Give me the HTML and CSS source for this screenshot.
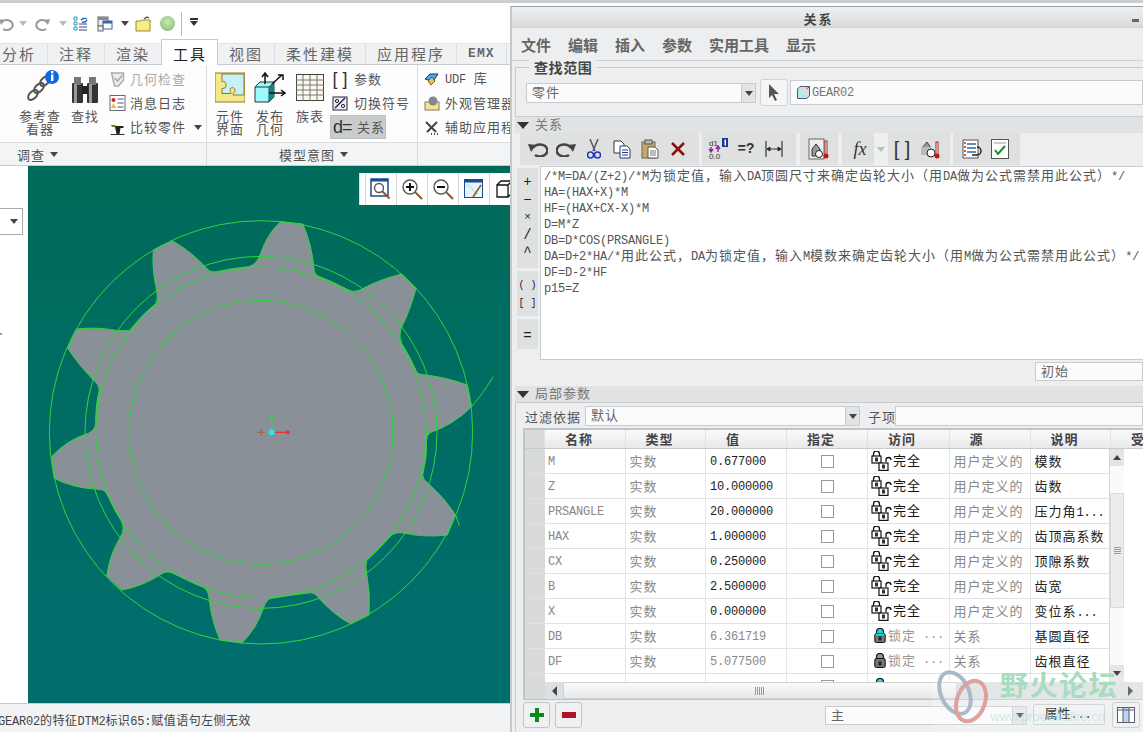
FILE: index.html
```html
<!DOCTYPE html>
<html lang="zh">
<head>
<meta charset="utf-8">
<title>关系</title>
<link rel="stylesheet" href="styles.css">
</head>
<body>
<svg class="defs" width="0" height="0">
  <symbol id="locks" viewBox="0 0 21 20">
    <path d="M2.5 5V3a3 3 0 0 1 6 0v2" fill="none" stroke="#111" stroke-width="1.3"/>
    <rect x="1" y="5" width="9" height="7" fill="#fff" stroke="#111" stroke-width="1.2"/>
    <rect x="4" y="6.5" width="3" height="4" fill="#333"/>
    <path d="M15 11V9a2.5 2.5 0 0 1 5 0" fill="none" stroke="#111" stroke-width="1.3"/>
    <rect x="8" y="12" width="9" height="7.4" fill="#fff" stroke="#111" stroke-width="1.2"/>
    <rect x="11" y="13.5" width="3" height="4" fill="#333"/>
  </symbol>
  <symbol id="lockc" viewBox="0 0 12 15">
    <path d="M2.5 6V4a3.5 3.5 0 0 1 7 0v2" fill="#18d8e8" stroke="#111" stroke-width="1.2"/>
    <rect x=".8" y="5.5" width="10.4" height="9" rx="1.5" fill="#777" stroke="#111"/>
    <rect x="1.5" y="5.5" width="9" height="2" fill="#18d8e8"/>
    <rect x="4.5" y="8.5" width="3" height="4" fill="#222"/>
  </symbol>
  <symbol id="lockg" viewBox="0 0 12 15">
    <path d="M2.5 6V4a3.5 3.5 0 0 1 7 0v2" fill="#999" stroke="#111" stroke-width="1.2"/>
    <rect x=".8" y="5.5" width="10.4" height="9" rx="1.5" fill="#777" stroke="#111"/>
    <rect x="4.5" y="8.5" width="3" height="4" fill="#222"/>
  </symbol>
</svg>

<div class="strip"></div>
<div class="main">

  <section class="cad">
    <div class="qat">
      <span class="q q1"><svg width="16" height="14" viewBox="0 0 16 14"><path d="M3 5a6 5 0 1 1 1 7" fill="none" stroke="#999" stroke-width="2"/><path d="M0 2l6 1-4 5z" fill="#999"/></svg></span>
      <span class="q q2"><i class="caret caret-lt"></i></span>
      <span class="q q3"><svg width="16" height="14" viewBox="0 0 16 14"><path d="M13 5a6 5 0 1 0-1 7" fill="none" stroke="#999" stroke-width="2"/><path d="M16 2l-6 1 4 5z" fill="#999"/></svg></span>
      <span class="q q4"><i class="caret caret-lt"></i></span>
      <span class="q q5"><svg width="16" height="16" viewBox="0 0 16 16"><path d="M1 1h3v3H1zM1 6h3v3H1zM1 11h3v3H1z" fill="#fff" stroke="#2a9ac0"/><path d="M6 8h8M6 11h8M6 14h8" stroke="#447"/><path d="M8 4a4 3 0 0 1 6-1M14 4a4 3 0 0 1-5 2" fill="none" stroke="#1b62c8" stroke-width="1.4"/></svg></span>
      <span class="q q6"><svg width="16" height="16" viewBox="0 0 16 16"><rect x="1" y="1" width="10" height="9" fill="#eee" stroke="#667"/><rect x="1" y="1" width="10" height="3" fill="#889"/><rect x="6" y="5" width="9" height="8" fill="#fff" stroke="#3465a4"/><rect x="6" y="5" width="9" height="2.5" fill="#3465a4"/><rect x="1" y="10" width="5" height="5" fill="#eee" stroke="#667"/></svg></span>
      <span class="q q7"><i class="caret"></i></span>
      <span class="q q8"><svg width="16" height="16" viewBox="0 0 16 16"><path d="M1 5h5l1-1h8v11H1z" fill="#f5ec8a" stroke="#a08a20"/><path d="M9 3l3-2 2 1" fill="none" stroke="#444" stroke-width="1.2"/></svg></span>
      <span class="q q9"><i class="ball"></i></span>
      <span class="q q10"><i class="vsep"></i></span>
      <span class="q q11"><i class="caret caret-line"></i></span>
    </div>

    <div class="tabs">
      <span class="tab tab-first">分析</span>
      <span class="tab">注释</span>
      <span class="tab">渲染</span>
      <span class="tab tab-on">工具</span>
      <span class="tab">视图</span>
      <span class="tab">柔性建模</span>
      <span class="tab">应用程序</span>
      <span class="tab tab-en">EMX</span>
      <span class="tab tab-last">管</span>
    </div>

    <div class="ribbon">
      <div class="grp grp1">
        <div class="big big1">
          <svg class="big-ic" width="38" height="40" viewBox="0 0 38 40"><g fill="none" stroke="#555" stroke-width="2"><ellipse cx="24" cy="13" rx="3.5" ry="6" transform="rotate(45 24 13)"/><ellipse cx="18" cy="20" rx="3.5" ry="6" transform="rotate(45 18 20)"/><ellipse cx="12" cy="27" rx="3.5" ry="6" transform="rotate(45 12 27)"/></g><circle cx="31" cy="9" r="7" fill="#0a6ae0"/><rect x="30" y="3" width="2.4" height="2.4" fill="#fff"/><rect x="30" y="6.5" width="2.4" height="6.5" fill="#fff"/></svg>
          <span class="lbl">参考查<br>看器</span>
        </div>
        <div class="big big2">
          <svg class="big-ic" width="30" height="40" viewBox="0 0 30 40"><rect x="2" y="15" width="11" height="20" rx="1" fill="#333"/><rect x="17" y="15" width="11" height="20" rx="1" fill="#333"/><rect x="4" y="9" width="7" height="8" fill="#777"/><rect x="19" y="9" width="7" height="8" fill="#777"/><rect x="12" y="18" width="6" height="8" fill="#222"/><rect x="4" y="16" width="3" height="19" fill="#999"/><rect x="19" y="16" width="3" height="19" fill="#999"/></svg>
          <span class="lbl">查找</span>
        </div>
        <div class="smalls">
          <div class="sm sm-off"><svg class="sm-ic" width="16" height="16" viewBox="0 0 16 16"><path d="M2 2h12v7l-5 6H5z" fill="#eee" stroke="#aaa" stroke-width="1.4"/><path d="M5 7l3 3 5-6" fill="none" stroke="#aaa" stroke-width="1.6"/></svg><span>几何检查</span></div>
          <div class="sm"><svg class="sm-ic" width="16" height="16" viewBox="0 0 16 16"><rect x=".5" y=".5" width="15" height="15" fill="#fff" stroke="#667"/><circle cx="4" cy="5" r="2" fill="#d22"/><path d="M4 8l2.5 5h-5z" fill="#e8c020"/><path d="M8 4h6M8 8h6M8 12h6" stroke="#556"/></svg><span>消息日志</span></div>
          <div class="sm"><svg class="sm-ic sm-anvil" width="16" height="14" viewBox="0 0 16 14"><path d="M1 12h14v1H1z" fill="#333"/><path d="M5 4h9v2h-3l-1 6H7L6 7z" fill="#222"/><path d="M1 3h5v2H3z" fill="#8a6a20"/></svg><span>比较零件</span><i class="caret caret-far"></i></div>
        </div>
      </div>
      <div class="grp grp2">
        <div class="big big3">
          <svg class="big-ic" width="30" height="32" viewBox="0 0 30 32"><rect width="30" height="29" y="1" fill="#f4e88a" stroke="#8a7a20"/><path d="M7 2h22v21H18c0-3 2-2 2-5s-5-3-5-.5c0 2 1 2 1 4H7v-5c3 0 4-1 4-4s-2-3-4-3z" fill="#c4f2f6" stroke="#8a7a20"/></svg>
          <span class="lbl">元件<br>界面</span>
        </div>
        <div class="big big4">
          <svg class="big-ic big-pub" width="32" height="32" viewBox="0 0 32 32"><path d="M1 15l5-5h14v15l-5 5H1z" fill="#9afafa" stroke="#333"/><path d="M1 15h14l5-5M15 15v15" fill="none" stroke="#333"/><path d="M15 15l5-5v15l-5 5z" fill="#0f8a88"/><path d="M11 12V2M8 5l3-4 3 4M15 21h15M27 18l4 3-4 3M18 12L28 3M24 3h5v5" fill="none" stroke="#111" stroke-width="1.5"/></svg>
          <span class="lbl">发布<br>几何</span>
        </div>
        <div class="big big5">
          <svg class="big-ic" width="28" height="28" viewBox="0 0 28 28"><rect x=".5" y=".5" width="27" height="26" fill="#fbf9ec" stroke="#444"/><path d="M0 6h28M0 11h28M0 16h28M0 21h28M7 1v26M14 1v26M21 1v26" stroke="#777"/></svg>
          <span class="lbl">族表</span>
        </div>
        <div class="smalls smalls2">
          <div class="sm"><span class="sm-ic2 br">[ ]</span><span>参数</span></div>
          <div class="sm"><svg class="sm-ic2" width="16" height="15" viewBox="0 0 16 15"><rect x="1" y="1" width="14" height="13" fill="#eee" stroke="#224"/><path d="M3 12L13 2" stroke="#226" stroke-width="1.5"/><circle cx="5" cy="5" r="1.6" fill="none" stroke="#222"/><circle cx="11" cy="10" r="1.6" fill="none" stroke="#222"/></svg><span>切换符号</span></div>
          <div class="sm sm-on"><span class="sm-ic2 deq">d=</span><span>关系</span></div>
        </div>
      </div>
      <div class="grp grp3">
        <div class="sm"><svg class="sm-ic3" width="16" height="14" viewBox="0 0 16 14"><path d="M1 7l5-5h8l-4 6H4z" fill="#4aa8e8" stroke="#236"/><path d="M7 13l-3-4 4-4 3 4z" fill="#e8c838" stroke="#654"/></svg><span><span class="en">UDF</span>&nbsp;&nbsp;库</span></div>
        <div class="sm"><svg class="sm-ic3" width="16" height="15" viewBox="0 0 16 15"><rect x="1" y="6" width="14" height="8" fill="#f4e68c" stroke="#876"/><circle cx="9" cy="5" r="4.5" fill="#888"/></svg><span>外观管理器</span></div>
        <div class="sm"><svg class="sm-ic3" width="16" height="15" viewBox="0 0 16 15"><path d="M2 2l10 10M13 2L3 12" stroke="#444" stroke-width="2"/><path d="M10 14h1M13 14h1M7 14h1" stroke="#111" stroke-width="1.5"/></svg><span>辅助应用程序</span></div>
      </div>
    </div>

    <div class="grpbar">
      <div class="gb gb1"><span>调查</span><i class="caret"></i></div>
      <div class="gb gb2"><span>模型意图</span><i class="caret"></i></div>
      <div class="gb gb3"></div>
    </div>

    <div class="work">
      <aside class="side">
        <div class="side-box"><i class="caret"></i></div>
        <i class="side-tick"></i>
      </aside>
      <div class="view">
        <svg class="gear" width="482" height="537" viewBox="0 0 482 537">
          <g transform="translate(2 34) scale(.33333)" fill="none" stroke="#2fd63c" stroke-width="3">
            <path class="gear-body" d="M600 207L655 200Q680 195 692 160Q712 100 752 65L818 72Q845 130 852 205Q852 222 865 228Q915 248 960 272Q980 278 1000 265Q1050 238 1115 222L1158 265Q1140 335 1113 385Q1105 410 1115 430Q1140 470 1160 515Q1165 525 1190 525Q1260 535 1312 555L1325 620Q1270 675 1200 698Q1190 705 1190 720Q1192 770 1178 825Q1178 840 1195 850Q1245 895 1277 945L1252 1005Q1185 1013 1125 1000Q1100 995 1085 1005Q1050 1045 1010 1082Q1005 1100 1010 1120Q1022 1180 1017 1245L962 1272Q905 1240 860 1187Q850 1175 830 1180Q780 1185 725 1195Q708 1198 700 1225Q680 1285 637 1328L570 1320Q545 1265 537 1195Q535 1170 520 1162Q470 1140 425 1118Q405 1112 390 1125Q335 1160 275 1170L230 1128Q240 1060 272 1010Q285 990 275 965Q250 925 232 885Q225 868 205 868Q130 865 73 835L65 770Q110 720 175 700Q195 690 197 670Q197 610 208 570Q205 550 190 540Q145 495 113 445L140 387Q200 380 265 392L298 392Q335 345 378 310Q385 295 380 270Q365 210 370 150L427 122Q485 155 530 205Q540 218 560 215Z"/>
            <circle cx="693" cy="697" r="635"/>
            <circle cx="693" cy="697" r="528"/>
            <circle cx="693" cy="697" r="496"/>
            <circle cx="693" cy="697" r="396"/>
            <path d="M1325 620Q1360 580 1390 530M1277 945L1288 977"/>
            <path d="M725 697V650" stroke-width="4"/>
            <circle cx="725" cy="649" r="5" fill="#2fd63c"/>
            <path d="M725 697H772" stroke="#f03030" stroke-width="4"/>
            <circle cx="773" cy="697" r="5" fill="#f03030" stroke="#f03030"/>
            <circle cx="725" cy="697" r="8" fill="#22e8ee" stroke="#22e8ee"/>
            <path d="M683 697H705M694 686V708" stroke="#a0622a" stroke-width="3"/>
          </g>
        </svg>
        <div class="vtb">
          <span class="vb"><svg width="22" height="22" viewBox="0 0 22 22"><rect x="1" y="1" width="17" height="17" fill="#fff" stroke="#1b4a90" stroke-width="1.5"/><rect x="1" y="1" width="17" height="2.5" fill="#1b4a90"/><circle cx="9" cy="10" r="4.5" fill="#fff" stroke="#555" stroke-width="1.4"/><path d="M12.5 13.5l7 7" stroke="#8a5a30" stroke-width="2"/></svg></span>
          <span class="vb"><svg width="22" height="22" viewBox="0 0 22 22"><circle cx="9" cy="9" r="7" fill="#fff" stroke="#555" stroke-width="1.4"/><path d="M5 9h8M9 5v8" stroke="#111" stroke-width="2"/><path d="M14 14l7 7" stroke="#8a5a30" stroke-width="2"/></svg></span>
          <span class="vb"><svg width="22" height="22" viewBox="0 0 22 22"><circle cx="9" cy="9" r="7" fill="#fff" stroke="#555" stroke-width="1.4"/><path d="M5 9h8" stroke="#111" stroke-width="2"/><path d="M14 14l7 7" stroke="#8a5a30" stroke-width="2"/></svg></span>
          <span class="vb"><svg width="20" height="20" viewBox="0 0 20 20"><rect x=".5" y=".5" width="18" height="18" fill="#e8f4fc" stroke="#1b4a90"/><rect x=".5" y=".5" width="18" height="3" fill="#1b4a90"/><path d="M4 6l9 9" stroke="#9cc" stroke-width="2" stroke-dasharray="1 2"/><path d="M17 6L9 18" stroke="#8a5a30" stroke-width="1.5"/></svg></span>
          <span class="vb"><svg width="20" height="20" viewBox="0 0 20 20"><path d="M2 6h11v12H2zM2 6l4-4h11v12l-4 4M13 6l4-4" fill="#fff" stroke="#111" stroke-width="1.3"/></svg></span>
        </div>
      </div>
    </div>
    <footer class="status"><span class="en">GEAR02</span>的特征<span class="en">DTM2</span>标识<span class="en">65:</span>赋值语句左侧无效</footer>
  </section>

  <section class="dlg">
    <div class="frame">
      <div class="title"><b>关系</b><i class="min"></i></div>
      <nav class="menu"><span>文件</span><span>编辑</span><span>插入</span><span>参数</span><span>实用工具</span><span>显示</span></nav>

      <div class="scope">
        <div class="legend">查找范围</div>
        <div class="scope-row">
          <div class="combo combo-part"><span>零件</span><i class="combo-a"><i class="caret"></i></i></div>
          <div class="pick"><svg width="12" height="17" viewBox="0 0 12 17"><path d="M1 0v14l3-3 3 6 2-1-3-6h5z" fill="#555"/></svg></div>
          <div class="field"><svg width="13" height="13" viewBox="0 0 13 13"><path d="M.5 3h9v9.500h-9z" fill="#9af4f4" stroke="#557"/><path d="M.5 3l2.500-2.500h9.500v9.500l-3 2.500M9.500 3L12.500 .5" fill="#d8dde0" stroke="#557"/></svg><span class="en">GEAR02</span></div>
        </div>
      </div>

      <div class="sect"><i class="tri"></i><span>关系</span></div>

      <div class="tools">
        <div class="tg tg1">
          <span class="ti"><svg width="20" height="16" viewBox="0 0 20 16"><path d="M5 7a7.500 6 0 1 1 2 7" fill="none" stroke="#444" stroke-width="2.500"/><path d="M0 3l8 1-5 7z" fill="#444"/></svg></span>
          <span class="ti"><svg width="20" height="16" viewBox="0 0 20 16"><path d="M15 7a7.500 6 0 1 0-2 7" fill="none" stroke="#444" stroke-width="2.500"/><path d="M20 3l-8 1 5 7z" fill="#444"/></svg></span>
          <span class="ti"><svg width="14" height="20" viewBox="0 0 14 20"><path d="M3 0l5 12M11 0L6 12" stroke="#556" stroke-width="1.5"/><circle cx="3.500" cy="16" r="3" fill="none" stroke="#1a3ac0" stroke-width="1.500"/><circle cx="10.500" cy="16" r="3" fill="none" stroke="#1a3ac0" stroke-width="1.500"/></svg></span>
          <span class="ti"><svg width="18" height="19" viewBox="0 0 18 19"><path d="M1 1h7l3 3v9H1z" fill="#fff" stroke="#333"/><path d="M7 6h7l3 3v9H7z" fill="#fff" stroke="#223a80"/><path d="M9 10h6M9 12.500h6M9 15h6" stroke="#223a80"/></svg></span>
          <span class="ti"><svg width="18" height="20" viewBox="0 0 18 20"><rect x="1" y="3" width="13" height="16" fill="#c8a868" stroke="#665"/><rect x="4" y="1" width="7" height="4" fill="#bbb" stroke="#555"/><path d="M7 8h7l3 3v8H7z" fill="#fff" stroke="#555"/><path d="M9 12h6M9 14h6M9 16h6" stroke="#777"/></svg></span>
          <span class="ti"><svg width="14" height="14" viewBox="0 0 14 14"><path d="M1 1l12 12M13 1L1 13" stroke="#8a1010" stroke-width="2.500"/></svg></span>
        </div>
        <div class="tg tg2">
          <span class="ti"><svg width="22" height="22" viewBox="0 0 22 22"><text x="2" y="8" class="svgt">d1</text><text x="2" y="21" class="svgt">0.0</text><path d="M4 9v4M2 11l2 3 2-3M11 14v-5M9 11l2-3 2 3" fill="none" stroke="#a020a0" stroke-width="1.400"/><rect x="15" y="0" width="6" height="9" fill="#1a3a90"/><rect x="17.500" y="1.500" width="1.500" height="6" fill="#fff"/></svg></span>
          <span class="ti ti-t">=?</span>
          <span class="ti"><svg width="18" height="16" viewBox="0 0 18 16"><path d="M1 0v16M17 0v16" stroke="#333" stroke-width="1.200"/><path d="M2 8h14M2 8l3-2v4zM16 8l-3-2v4z" stroke="#333"/></svg></span>
        </div>
        <div class="tg tg3">
          <span class="ti"><svg width="22" height="22" viewBox="0 0 22 22"><rect x="1" y="1" width="15" height="20" fill="#eee" stroke="#666"/><path d="M4 11l4-5 4 5v7H4z" fill="#999" stroke="#333"/><circle cx="11" cy="16" r="3.500" fill="#fff" stroke="#222"/><rect x="17" y="3" width="2" height="14" fill="#fff" stroke="#a22"/><circle cx="18" cy="18" r="2.500" fill="#c11"/></svg></span>
        </div>
        <div class="tg tg4">
          <span class="ti ti-fx">fx</span>
          <span class="ti ti-dd"><i class="caret caret-lt"></i></span>
          <span class="ti ti-br">[ ]</span>
          <span class="ti"><svg width="20" height="20" viewBox="0 0 20 20"><path d="M2 9l5-6 4 6z" fill="#999" stroke="#444"/><rect x="1" y="8" width="10" height="8" fill="#bbb"/><circle cx="11" cy="14" r="4" fill="#fff" stroke="#222"/><rect x="16" y="3" width="2" height="13" fill="#fff" stroke="#a22"/><circle cx="17" cy="17" r="2.500" fill="#c11"/></svg></span>
        </div>
        <div class="tg tg5">
          <span class="ti"><svg width="21" height="20" viewBox="0 0 21 20"><rect x="1" y="1" width="15" height="18" fill="#fff" stroke="#555"/><path d="M5 5h9M5 9h9M5 13h9" stroke="#3465a4" stroke-width="1.300"/><path d="M2 4h2M2 8h2M2 12h2M2 16h2" stroke="#c22" stroke-width="1.300"/><path d="M15 8a4 4 0 0 1 0 8h-5" fill="none" stroke="#222" stroke-width="1.500"/></svg></span>
          <span class="ti"><svg width="18" height="20" viewBox="0 0 18 20"><rect x=".5" y=".5" width="17" height="19" fill="#fff" stroke="#555"/><path d="M3 4h12" stroke="#999"/><path d="M4 11l3 4 7-8" fill="none" stroke="#1a8a2a" stroke-width="2"/></svg></span>
        </div>
      </div>

      <div class="edit-wrap">
        <div class="palette">
          <div class="pg pg1"><span>+</span><span>−</span><span class="pk">×</span><span>/</span><span>^</span></div>
          <div class="pg pg2"><span>( )</span><span>[ ]</span></div>
          <div class="pg pg3"><span>=</span></div>
        </div>
        <div class="editor">
          <div class="ln"><span class="en">/*M=DA/(Z+2)/*M</span>为锁定值，输入<span class="en">DA</span>顶圆尺寸来确定齿轮大小（用<span class="en">DA</span>做为公式需禁用此公式）<span class="en">*/</span></div>
          <div class="ln en">HA=(HAX+X)*M</div>
          <div class="ln en">HF=(HAX+CX-X)*M</div>
          <div class="ln en">D=M*Z</div>
          <div class="ln en">DB=D*COS(PRSANGLE)</div>
          <div class="ln"><span class="en">DA=D+2*HA/*</span>用此公式，<span class="en">DA</span>为锁定值，输入<span class="en">M</span>模数来确定齿轮大小（用<span class="en">M</span>做为公式需禁用此公式）<span class="en">*/</span></div>
          <div class="ln en">DF=D-2*HF</div>
          <div class="ln en">p15=Z</div>
        </div>
      </div>

      <div class="init-row"><div class="init">初始</div></div>

      <div class="sect"><i class="tri"></i><span>局部参数</span></div>

      <div class="params">
        <div class="filter">
          <label>过滤依据</label>
          <div class="combo combo-filter"><span>默认</span><i class="combo-a"><i class="caret"></i></i></div>
          <label class="sub">子项</label>
          <div class="sub-in"></div>
        </div>

        <div class="table">
          <div class="thead">
            <span class="rh"></span><span>名称</span><span>类型</span><span>值</span><span>指定</span><span>访问</span><span>源</span><span>说明</span><span>受</span>
          </div>
          <div class="tbody">
            <div class="rows">
              <div class="tr"><span class="rh"></span><span class="c-name en">M</span><span class="c-g">实数</span><span class="c-v en">0.677000</span><span class="c-k"><i class="cb"></i></span><span class="c-a"><svg width="21" height="20"><use href="#locks"/></svg>完全</span><span class="c-g">用户定义的</span><span class="c-d">模数</span><span></span></div>
              <div class="tr"><span class="rh"></span><span class="c-name en">Z</span><span class="c-g">实数</span><span class="c-v en">10.000000</span><span class="c-k"><i class="cb"></i></span><span class="c-a"><svg width="21" height="20"><use href="#locks"/></svg>完全</span><span class="c-g">用户定义的</span><span class="c-d">齿数</span><span></span></div>
              <div class="tr"><span class="rh"></span><span class="c-name en">PRSANGLE</span><span class="c-g">实数</span><span class="c-v en">20.000000</span><span class="c-k"><i class="cb"></i></span><span class="c-a"><svg width="21" height="20"><use href="#locks"/></svg>完全</span><span class="c-g">用户定义的</span><span class="c-d">压力角<span class="en">1...</span></span><span></span></div>
              <div class="tr"><span class="rh"></span><span class="c-name en">HAX</span><span class="c-g">实数</span><span class="c-v en">1.000000</span><span class="c-k"><i class="cb"></i></span><span class="c-a"><svg width="21" height="20"><use href="#locks"/></svg>完全</span><span class="c-g">用户定义的</span><span class="c-d">齿顶高系数</span><span></span></div>
              <div class="tr"><span class="rh"></span><span class="c-name en">CX</span><span class="c-g">实数</span><span class="c-v en">0.250000</span><span class="c-k"><i class="cb"></i></span><span class="c-a"><svg width="21" height="20"><use href="#locks"/></svg>完全</span><span class="c-g">用户定义的</span><span class="c-d">顶隙系数</span><span></span></div>
              <div class="tr"><span class="rh"></span><span class="c-name en">B</span><span class="c-g">实数</span><span class="c-v en">2.500000</span><span class="c-k"><i class="cb"></i></span><span class="c-a"><svg width="21" height="20"><use href="#locks"/></svg>完全</span><span class="c-g">用户定义的</span><span class="c-d">齿宽</span><span></span></div>
              <div class="tr"><span class="rh"></span><span class="c-name en">X</span><span class="c-g">实数</span><span class="c-v en">0.000000</span><span class="c-k"><i class="cb"></i></span><span class="c-a"><svg width="21" height="20"><use href="#locks"/></svg>完全</span><span class="c-g">用户定义的</span><span class="c-d">变位系<span class="en">...</span></span><span></span></div>
              <div class="tr"><span class="rh"></span><span class="c-name en">DB</span><span class="c-g">实数</span><span class="c-v c-vg en">6.361719</span><span class="c-k"><i class="cb"></i></span><span class="c-a c-l"><svg width="12" height="15"><use href="#lockc"/></svg>锁定<span class="en">&nbsp;...</span></span><span class="c-g">关系</span><span class="c-d">基圆直径</span><span></span></div>
              <div class="tr"><span class="rh"></span><span class="c-name en">DF</span><span class="c-g">实数</span><span class="c-v c-vg en">5.077500</span><span class="c-k"><i class="cb"></i></span><span class="c-a c-l"><svg width="12" height="15"><use href="#lockg"/></svg>锁定<span class="en">&nbsp;...</span></span><span class="c-g">关系</span><span class="c-d">齿根直径</span><span></span></div>
              <div class="tr"><span class="rh"></span><span class="c-name en"></span><span class="c-g"></span><span class="c-v"></span><span class="c-k"><i class="cb"></i></span><span class="c-a c-l"><svg width="12" height="15"><use href="#lockc"/></svg></span><span class="c-g"></span><span class="c-d"></span><span></span></div>
            </div>
            <div class="vbar">
              <span class="vbtn"><i class="caret caret-up"></i></span>
              <span class="vtrack"></span>
              <span class="vthumb"><i class="vgrip"></i></span>
              <span class="vtrack2"></span>
              <span class="vbtn"><i class="caret"></i></span>
            </div>
          </div>
          <div class="hbar">
            <span class="rh rh-h"></span>
            <span class="hbtn"><i class="tri-l"></i></span>
            <span class="hthumb"><i class="hgrip"></i></span>
            <span class="hbtn hbtn-r"><i class="tri-r"></i></span>
          </div>
        </div>

        <div class="bottom">
          <button class="bt"><svg width="14" height="14" viewBox="0 0 14 14"><path d="M5 0h4v5h5v4H9v5H5V9H0V5h5z" fill="#0a8a1a"/></svg></button>
          <button class="bt"><svg width="14" height="6" viewBox="0 0 14 6"><rect width="14" height="6" fill="#b01028"/></svg></button>
          <div class="combo combo-main"><span>主</span><i class="combo-a"><i class="caret"></i></i></div>
          <button class="prop">属性<span class="en">...</span></button>
          <button class="bt bt-grid"><svg width="18" height="16" viewBox="0 0 18 16"><rect x=".5" y=".5" width="17" height="15" fill="#fff" stroke="#334"/><rect x="6" y="1" width="6" height="14" fill="#a8c8f0"/><path d="M1 3h16M6 1v14M12 1v14" stroke="#334"/></svg></button>
        </div>
      </div>
    </div>

    <div class="wm">
      <svg class="wm-logo" width="58" height="54" viewBox="0 0 58 54"><ellipse cx="20" cy="24" rx="14" ry="22" transform="rotate(-25 20 24)" fill="none" stroke="#a8bcc8" stroke-width="4"/><ellipse cx="36" cy="32" rx="14" ry="21" transform="rotate(20 36 32)" fill="none" stroke="#e0a0a0" stroke-width="4"/></svg>
      <div class="wm-t">野火论坛</div>
      <div class="wm-u">www.proewildfire.cn</div>
    </div>
  </section>
</div>
</body>
</html>
```

FILE: styles.css
```css
* { box-sizing: border-box; }
html, body { margin: 0; padding: 0; }
body {
  width: 1143px; height: 732px; overflow: hidden;
  background: #fff; color: #555;
  font-family: "Noto Sans CJK SC", "Liberation Sans", sans-serif;
  font-size: 13px; letter-spacing: 1px;
}
i { font-style: normal; display: block; }
.defs { position: absolute; }
.en { font-family: "Liberation Mono", monospace; font-size: 12px; letter-spacing: -.2px; }

.caret { width: 0; height: 0; border: 4px solid transparent; border-top: 5px solid #444; border-bottom: 0; }
.caret-lt { border-top-color: #bbb; }
.caret-up { border-top: 0; border-bottom: 5px solid #444; }
.caret-line { border-top-color: #333; position: relative; }
.caret-line::before { content: ""; display: block; position: absolute; left: -4px; top: -8px; width: 8px; height: 2px; background: #333; }

.strip { height: 3px; background: #c9ced2; }
.main { display: flex; height: 729px; }

/* ---- left: CAD window ---- */
.cad { width: 510px; display: flex; flex-direction: column; overflow: hidden; }
.qat { height: 40px; display: flex; align-items: center; background: #fff; margin-left: -1px; padding-top: 1px; }
.q { display: flex; justify-content: center; align-items: center; height: 24px; flex: none; }
.q1 { width: 16px; } .q2 { width: 16px; } .q3 { width: 22px; } .q4 { width: 20px; }
.q5 { width: 16px; } .q6 { width: 32px; } .q7 { width: 8px; } .q8 { width: 28px; }
.q9 { width: 20px; } .q10 { width: 8px; } .q11 { width: 18px; }
.ball { width: 15px; height: 15px; border-radius: 50%; background: radial-gradient(circle at 50% 40%, #cfeab0, #98c888 65%, #889); }
.vsep { width: 1px; height: 24px; background: #bbb; }

.tabs { height: 22px; display: flex; background: #f0f1f3; border-top: 1px solid #e2e4e6; border-bottom: 1px solid #c8cbce; position: relative; }
.tab { flex: none; padding: 0 11px; font-size: 15px; letter-spacing: 2px; line-height: 19px; color: #666; border-right: 1px solid #dcdee0; white-space: nowrap; }
.tab-first { margin-left: -9px; }
.tab-on { background: #fff; color: #222; height: 26px; margin-top: -5px; line-height: 28px; border: 1px solid #c8cbce; border-bottom: 0; position: relative; z-index: 1; padding: 0 10px 0 11px; margin-left: -1px; }
.tab-en { font-family: "Liberation Mono", monospace; font-size: 13px; font-weight: bold; letter-spacing: 1px; }
.tab-last { border: 0; }

.ribbon { height: 77px; display: flex; background: #fdfdfd; }
.grp { display: flex; flex: none; border-right: 1px solid #d8dadc; }
.grp1 { width: 207px; padding-left: 17px; }
.grp2 { width: 211px; padding-left: 3px; }
.grp3 { flex: 1; flex-direction: column; border: 0; padding: 2px 0 0 6px; white-space: nowrap; }
.big { display: flex; flex-direction: column; align-items: center; flex: none; }
.big-ic { height: 40px; flex: none; margin-top: 3px; }
.lbl { text-align: center; line-height: 13px; margin-top: 1px; font-size: 13px; }
.big1 { width: 46px; } .big2 { width: 44px; }
.big3, .big4, .big5 { width: 40px; }
.smalls { padding-top: 2px; margin-left: 2px; }
.smalls2 { margin-left: 0; }
.sm { display: flex; align-items: center; height: 24px; line-height: 24px; white-space: nowrap; }
.sm-ic { width: 21px; flex: none; padding-right: 4px; }
.sm-anvil { margin-top: 3px; }
.sm-off { color: #aaa; }
.caret-far { margin-left: 8px; }
.sm-ic2 { width: 24px; flex: none; padding-right: 4px; text-align: center; }
.br { font-size: 18px; letter-spacing: 0; line-height: 20px; color: #333; font-family: "Liberation Sans", sans-serif; }
.deq { font-family: "Liberation Sans", sans-serif; font-size: 18px; letter-spacing: -1px; color: #333; padding: 0; text-align: left; }
.sm-on { background: #c9cccc; width: 56px; border: 1px solid #bcbfbf; padding-left: 2px; }
.sm-ic3 { width: 21px; flex: none; padding-right: 5px; }

.grpbar { height: 24px; display: flex; background: #f3f4f5; border-top: 1px solid #d8dadc; border-bottom: 1px solid #c8cbce; color: #555; }
.gb { display: flex; align-items: center; gap: 5px; flex: none; border-right: 1px solid #d8dadc; }
.gb1 { width: 207px; padding-left: 17px; }
.gb2 { width: 211px; padding-left: 72px; }
.gb3 { flex: 1; border: 0; }

.work { height: 537px; display: flex; flex: none; }
.side { width: 28px; background: #fff; flex: none; }
.side-box { width: 23px; height: 27px; margin-top: 42px; border: 1px solid #aaa; border-left: 0; display: flex; align-items: center; padding-left: 10px; }
.side-tick { width: 2px; height: 2px; background: #999; margin-top: 98px; }
.view { flex: 1; position: relative; background: linear-gradient(#006a5a, #006e6e); overflow: hidden; }
.gear { display: block; }
.gear-body { fill: #8a9098; }
.vtb { position: absolute; left: 331px; top: 7px; width: 151px; height: 32px; display: flex; background: #fff; padding-left: 5px; border-left: 1px solid #ddd; }
.vb { width: 31px; flex: none; border-left: 1px solid #d5d7d9; display: flex; justify-content: center; align-items: center; }

.status { height: 29px; flex: none; background: #f2f3f4; border-top: 1px solid #c8cbce; line-height: 31px; white-space: nowrap; color: #444; font-size: 12px; letter-spacing: .45px; margin-left: -2px; }
.status .en { letter-spacing: -.2px; }

/* ---- right: relations dialog ---- */
.dlg { width: 633px; padding-top: 3px; position: relative; overflow: hidden; }
.frame { height: 726px; border-top: 1px solid #9a9ea2; border-left: 2px solid #c6c9cb; background: #eceef0; display: flex; flex-direction: column; }
.title { height: 21px; flex: none; background: linear-gradient(#eef0f1, #d8dadc); display: flex; justify-content: center; align-items: center; position: relative; color: #444; font-size: 13px; padding: 3px 18px 0 0; border-bottom: 1px solid #cfd1d3; }
.title b { letter-spacing: 2px; }
.min { position: absolute; right: 4px; top: 12px; width: 7px; height: 3px; background: #666; }
.menu { height: 33px; flex: none; display: flex; gap: 17px; padding-left: 9px; align-items: center; border-bottom: 1px solid #cfd1d3; font-size: 15px; letter-spacing: 0; font-weight: bold; color: #666; }

.scope { height: 50px; flex: none; margin: 6px 0 0 3px; border: 1px solid #c9ccce; border-right: 0; }
.legend { width: max-content; height: 18px; margin: -10px 0 0 13px; padding: 0 5px; background: #eceef0; font-weight: bold; font-size: 14px; letter-spacing: .6px; line-height: 18px; color: #444; }
.scope-row { display: flex; margin: 3px 0 0 10px; align-items: flex-start; }
.combo { display: flex; align-items: center; background: #fbfbfb; border: 1px solid #c9ccce; position: relative; padding-left: 5px; flex: none; }
.combo span { flex: 1; color: #666; line-height: 16px; padding-bottom: 2px; }
.combo-a { width: 14px; align-self: stretch; background: #e2e4e6; border-left: 1px solid #c9ccce; display: flex; justify-content: center; align-items: center; }
.combo-part { width: 230px; height: 20px; margin-top: 4px; }
.pick { width: 28px; height: 27px; margin-left: 4px; border: 1px solid #d0d3d5; border-radius: 3px; background: #f4f5f6; display: flex; justify-content: center; align-items: center; flex: none; }
.field { flex: 1; height: 25px; margin: 1px 0 0 2px; background: #fbfbfb; border: 1px solid #c9ccce; display: flex; align-items: center; padding-left: 6px; gap: 2px; color: #777; }

.sect { height: 16px; flex: none; margin-left: 3px; background: #e0e2e3; display: flex; align-items: center; padding-left: 2px; gap: 6px; color: #777; line-height: 14px; }
.sect span { padding-bottom: 2px; }
.tri { width: 0; height: 0; border: 6px solid transparent; border-top: 7px solid #333; border-bottom: 0; }

.tools { height: 32px; flex: none; display: flex; padding-left: 8px; background: #eceef0; }
.tg { height: 32px; flex: none; background: #dfe1e1; display: flex; align-items: center; margin-right: 3px; }
.tg1 { width: 179px; padding-left: 4px; }
.tg2 { width: 94px; padding-left: 2px; margin-right: 4px; }
.tg3 { width: 38px; padding-left: 5px; margin-right: 4px; }
.tg4 { width: 108px; padding-left: 4px; }
.tg5 { width: 67px; padding-left: 5px; }
.ti { width: 28px; height: 32px; flex: none; display: flex; justify-content: center; align-items: center; color: #333; }
.ti-t { font-family: "Liberation Mono", monospace; font-weight: bold; font-size: 14px; letter-spacing: 0; }
.ti-fx { font-family: "Liberation Serif", serif; font-style: italic; font-size: 18px; letter-spacing: 0; }
.ti-dd { width: 14px; background: #eef0f0; }
.ti-br { font-size: 20px; letter-spacing: 0; font-family: "Liberation Sans", sans-serif; font-weight: normal; }
.svgt { font-family: "Liberation Sans", sans-serif; font-size: 8px; letter-spacing: 0; fill: #333; }

.edit-wrap { height: 195px; flex: none; display: flex; margin-left: 5px; }
.palette { width: 23px; flex: none; display: flex; flex-direction: column; gap: 3px; padding-top: 3px; }
.pg { background: #dfe1e1; display: flex; flex-direction: column; align-items: center; width: 21px; color: #222; font-family: "Liberation Mono", monospace; letter-spacing: 0; }
.pg span { height: 17.5px; line-height: 17.5px; flex: none; }
.pg1 { height: 100px; padding-top: 6px; font-size: 14px; }
.pg2 { height: 45px; padding-top: 6px; font-size: 10px; }
.pg3 { height: 30px; padding-top: 9px; font-size: 14px; }
.pk { font-size: 11px; }
.editor { flex: 1; background: #fff; border: 1px solid #c8cbcd; border-right: 0; padding: 1px 0 0 3px; color: #555; white-space: nowrap; overflow: hidden; margin-top: 1px; height: 194px; }
.ln { height: 16px; line-height: 14px; }
.ln.en { line-height: 19px; }

.init-row { height: 26px; flex: none; display: flex; justify-content: flex-end; padding-top: 2px; }
.init { width: 108px; height: 19px; background: #fbfbfb; border: 1px solid #c9ccce; padding-left: 5px; line-height: 16px; color: #666; }

.params { flex: 1; margin-left: 3px; border-left: 1px solid #c9ccce; border-top: 1px solid #c9ccce; display: flex; flex-direction: column; min-height: 0; }
.filter { height: 25px; flex: none; display: flex; align-items: center; padding: 1px 0 0 9px; color: #555; }
.filter label { width: 60px; flex: none; white-space: nowrap; }
.combo-filter { width: 275px; height: 20px; }
.filter .sub { padding-left: 8px; box-sizing: content-box; width: 27px; }
.sub-in { flex: 1; height: 20px; background: #fbfbfb; border: 1px solid #c9ccce; }

.table { height: 272px; flex: none; margin-left: 7px; border: 2px solid #c2c5c7; border-right: 0; border-bottom: 1px solid #c2c5c7; background: #fff; overflow: hidden; }
.thead, .tr { display: grid; grid-template-columns: 20px 80.5px 80.5px 81px 81px 81.5px 81px 80.5px 81px; }
.thead { height: 19px; background: linear-gradient(#fafafa, #e8e9ea); border-bottom: 1px solid #c8cbcd; font-weight: bold; color: #444; white-space: nowrap; line-height: 18px; }
.thead span { padding-left: 20px; border-right: 1px solid #dfe1e2; }
.thead .rh { padding: 0; }
.rh { background: #d9dbdb; }
.tbody { display: flex; height: 233px; }
.rows { width: 584px; flex: none; overflow: hidden; }
.tr { height: 25px; width: 605px; line-height: 24px; border-bottom: 1px solid #dfe1e2; white-space: nowrap; }
.tr > span { border-right: 1px solid #e4e6e7; padding-left: 4px; overflow: hidden; }
.tr > .en { line-height: 26px; }
.tr .rh { padding: 0; border-right: 0; }
.c-name { color: #888; padding-left: 3px !important; }
.c-g { color: #888; }
.c-v { color: #222; }
.c-vg { color: #888; }
.c-d { color: #222; }
.c-k { display: flex; justify-content: center; align-items: center; padding: 0 !important; }
.cb { width: 13px; height: 13px; background: #fff; border: 1px solid #999; }
.c-a { display: flex; align-items: center; padding: 0 0 3px 3px !important; color: #111; line-height: 18px; }
.c-a svg { flex: none; margin: 2px 1px 0 0; }
.c-l { color: #999; padding-left: 6px !important; }
.c-l svg { margin-right: 2px; }

.vbar { width: 15px; flex: none; background: #f0f1f2; display: flex; flex-direction: column; border-left: 1px solid #d4d6d8; }
.vbtn { height: 17px; flex: none; display: flex; justify-content: center; align-items: center; background: #e2e4e6; }
.vtrack { height: 27px; flex: none; background: #fafafa; }
.vthumb { flex: none; height: 115px; background: #eaecee; display: flex; justify-content: center; align-items: center; border: 1px solid #d8dadc; }
.vgrip { width: 7px; height: 8px; background: repeating-linear-gradient(#999 0 1px, transparent 1px 2px); }
.vtrack2 { flex: 1; background: #fafafa; }
.hbar { display: flex; height: 17px; background: #dde0e2; }
.rh-h { width: 20px; flex: none; }
.hbtn { width: 18px; flex: none; display: flex; justify-content: center; align-items: center; }
.hbtn-r { margin-left: 164px; }
.hthumb { width: 394px; flex: none; background: linear-gradient(#fafafa, #e6e8ea); border: 1px solid #cfd1d3; display: flex; justify-content: center; align-items: center; }
.hgrip { width: 10px; height: 8px; background: repeating-linear-gradient(90deg, #999 0 1px, transparent 1px 2px); }
.tri-l { border: 5px solid transparent; border-right: 5px solid #444; border-left: 0; }
.tri-r { border: 5px solid transparent; border-left: 5px solid #444; border-right: 0; }

.bottom { height: 32px; flex: none; display: flex; align-items: flex-start; padding: 2px 0 0 7px; }
.bt { width: 27px; height: 26px; flex: none; padding: 0; display: flex; justify-content: center; align-items: center; background: #eef0f1; border: 1px solid #c2c5c7; border-radius: 3px; margin-right: 5px; }
.combo-main { width: 202px; height: 19px; margin: 4px 0 0 238px; }
.prop { width: 72px; height: 21px; flex: none; margin: 2px 0 0 6px; padding: 0 2px 2px 0; background: #eef0f1; border: 1px solid #c9ccce; border-radius: 2px; font: inherit; color: #000; white-space: nowrap; line-height: 16px; }
.bt-grid { width: 28px; margin: 0 0 0 7px; }

.wm { position: absolute; left: 422px; top: 672px; width: 211px; height: 60px; background: rgba(255, 255, 255, .2); }
.wm-logo { position: absolute; left: 3px; top: -6px; }
.wm-t { position: absolute; left: 68px; top: -9px; font-size: 28px; line-height: 36px; font-weight: bold; letter-spacing: 1.5px; color: #a8dcc0; white-space: nowrap; }
.wm-u { position: absolute; left: 58px; top: 34px; font-family: "Liberation Sans", sans-serif; font-size: 13px; letter-spacing: 0; color: rgba(190, 220, 228, .7); white-space: nowrap; }
```
